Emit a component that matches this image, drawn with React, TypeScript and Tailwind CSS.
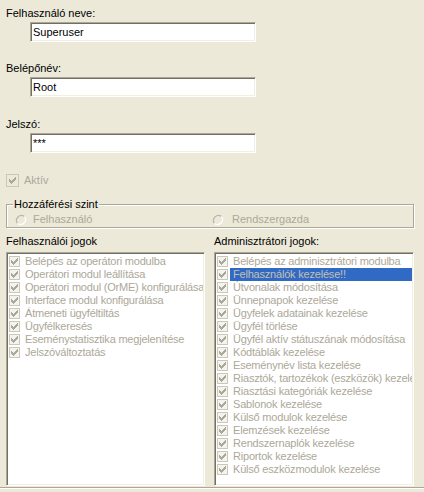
import React from "react";

const GRAY = "#aca899";

function Check({ size }: { size: number }) {
  const o = size === 13 ? 3 : 2;
  const cols = [2, 3, 4, 3, 2, 1, 0];
  return (
    <svg width={size} height={size} shapeRendering="crispEdges" className="block shrink-0">
      <rect x={0.5} y={0.5} width={size - 1} height={size - 1} fill={size === 13 ? "#ece9d8" : "#f4f3ee"} stroke="#cac8bb" />
      {cols.map((dy, dx) => (
        <rect key={dx} x={o + dx} y={o + dy} width={1} height={3} fill={GRAY} />
      ))}
    </svg>
  );
}

function Radio() {
  return (
    <svg width={12} height={12} className="block shrink-0">
      <circle cx={6} cy={6} r={5} fill="#ece9d8" />
      <path d="M9.5 2.5 A5 5 0 0 0 2.5 9.5" fill="none" stroke="#b9b6a9" strokeWidth={1.2} />
      <path d="M2.5 9.5 A5 5 0 0 0 9.5 2.5" fill="none" stroke="#ffffff" strokeWidth={1.2} />
    </svg>
  );
}

function TextBox({ value }: { value: string }) {
  return (
    <div className="ml-[24px] mt-[2px] w-[226px] h-[20px] bg-white border border-t-[#aca899] border-l-[#aca899] border-r-white border-b-white shadow-[inset_1px_1px_0_#716f64,inset_-1px_-1px_0_#f1efe2] pl-[2px] pt-[1px] leading-[16px] text-black">
      {value}
    </div>
  );
}

function ListBox({ items, selected }: { items: string[]; selected?: number }) {
  return (
    <div className="mt-[4px] h-[234px] bg-white border border-t-[#aca899] border-l-[#aca899] border-r-white border-b-white shadow-[inset_1px_1px_0_#716f64,inset_-1px_-1px_0_#f1efe2] p-[1px] pt-[2px] overflow-hidden">
      {items.map((t, i) => (
        <div key={i} className="flex items-center h-[13px] pl-[1px]">
          <Check size={11} />
          <div
            className={
              "ml-[2px] flex-1 h-[13px] leading-[13px] pl-[3px] whitespace-nowrap overflow-hidden tracking-[-0.2px] " +
              (i === selected ? "bg-[#316ac5] text-[#c4c0b0]" : "text-[#aca899]")
            }
          >
            {t}
          </div>
        </div>
      ))}
    </div>
  );
}

const userRights = [
  "Belépés az operátori modulba",
  "Operátori modul leállítása",
  "Operátori modul (OrME) konfigurálása",
  "Interface modul konfigurálása",
  "Átmeneti ügyféltiltás",
  "Ügyfélkeresés",
  "Eseménystatisztika megjelenítése",
  "Jelszóváltoztatás",
];

const adminRights = [
  "Belépés az adminisztrátori modulba",
  "Felhasználók kezelése!!",
  "Útvonalak módosítása",
  "Ünnepnapok kezelése",
  "Ügyfelek adatainak kezelése",
  "Ügyfél törlése",
  "Ügyfél aktív státuszának módosítása",
  "Kódtáblák kezelése",
  "Eseménynév lista kezelése",
  "Riasztók, tartozékok (eszközök) kezelése",
  "Riasztási kategóriák kezelése",
  "Sablonok kezelése",
  "Külső modulok kezelése",
  "Elemzések kezelése",
  "Rendszernaplók kezelése",
  "Riportok kezelése",
  "Külső eszközmodulok kezelése",
];

export default function App() {
  return (
    <div className="w-[424px] h-[492px] bg-[#ece9d8] text-[11px] leading-[13px] text-black font-['Liberation_Sans',Arial,sans-serif] flex flex-col overflow-hidden">
      <div className="pl-[6px] pt-[7px]">
        <div>Felhasználó neve:</div>
        <TextBox value="Superuser" />
        <div className="mt-[20px]">Belépőnév:</div>
        <TextBox value="Root" />
        <div className="mt-[21px]">Jelszó:</div>
        <TextBox value="***" />
        <div className="mt-[21px] flex items-center h-[13px]">
          <Check size={13} />
          <span className="ml-[5px] text-[#aca899]">Aktív</span>
        </div>
      </div>

      <fieldset className="mt-[11px] ml-[6px] w-[408px] border border-[#aca899] shadow-[1px_1px_0_#ffffff,inset_1px_1px_0_#ffffff] pb-[1px]">
        <legend className="ml-[6px] px-[1px] bg-[#ece9d8] leading-[13px]">Hozzáférési szint</legend>
        <div className="flex items-center h-[13px] mt-[2px]">
          <div className="w-[197px] ml-[8px] flex items-center">
            <Radio />
            <span className="ml-[6px] text-[#aca899]">Felhasználó</span>
          </div>
          <div className="flex items-center">
            <Radio />
            <span className="ml-[8px] text-[#aca899]">Rendszergazda</span>
          </div>
        </div>
      </fieldset>

      <div className="mt-[7px] ml-[6px] grid grid-cols-[199px_200px] gap-x-[9px]">
        <div>
          <div>Felhasználói jogok</div>
          <ListBox items={userRights} />
        </div>
        <div>
          <div>Adminisztrátori jogok:</div>
          <ListBox items={adminRights} selected={1} />
        </div>
      </div>

      <div className="mt-[1px] border-t border-t-[#aca899] border-b border-b-white" />
    </div>
  );
}
